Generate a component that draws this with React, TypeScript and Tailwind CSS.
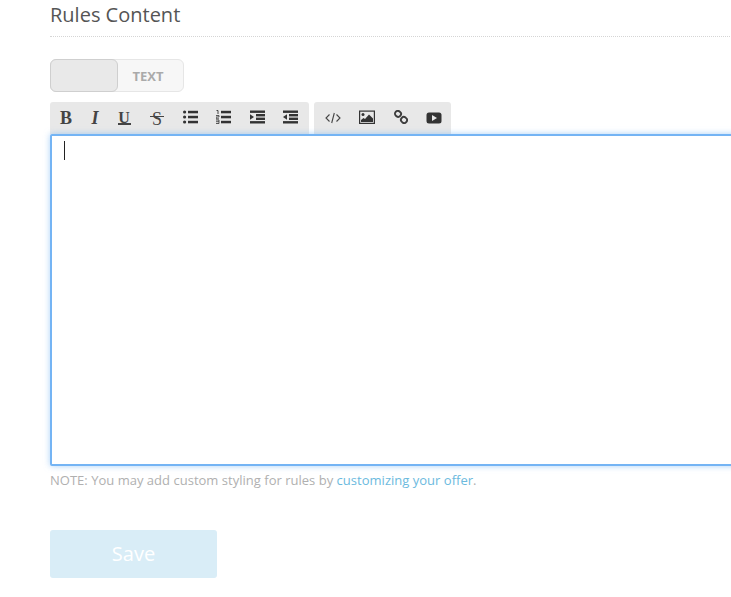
import React from "react";

const Btn = ({ children, w }: { children: React.ReactNode; w: string }) => (
  <span className={"flex h-8 items-center justify-center text-[#444] " + w}>{children}</span>
);

const Serif = ({ children, className }: { children: React.ReactNode; className: string }) => (
  <span className={"font-['Liberation_Serif',serif] leading-none text-[#444] " + className}>{children}</span>
);

const Svg = ({ children, w = 16, h = 14 }: { children: React.ReactNode; w?: number; h?: number }) => (
  <svg width={w} height={h} viewBox={`0 0 ${w} ${h}`} fill="#333">{children}</svg>
);

const Bars = () => (
  <>
    <rect x="5" y="0.8" width="10" height="2.5" />
    <rect x="5" y="5.8" width="10" height="2.5" />
    <rect x="5" y="10.8" width="10" height="2.5" />
  </>
);

const IndentBars = () => (
  <>
    <rect x="0" y="0.5" width="15" height="2.4" />
    <rect x="6" y="4" width="9" height="2.4" />
    <rect x="6" y="7.6" width="9" height="2.4" />
    <rect x="0" y="11.1" width="15" height="2.4" />
  </>
);

export default function App() {
  return (
    <div className="h-[597px] w-[731px] overflow-hidden bg-white pl-[50px] font-['Open_Sans',sans-serif]">
      <div className="w-[720px]">
        <h2 className="h-[37px] border-b border-dotted border-[#d5d5d5] pt-[1px] text-[20px] leading-[27px] text-[#555]">Rules Content</h2>

        <div className="mt-[22px] flex h-[33px] w-[134px] rounded-[6px] border border-[#e6e6e6] bg-[#f7f7f7]">
          <div className="-my-px -ml-px h-[33px] w-[68px] rounded-[6px] border border-[#cfcfcf] bg-[#e9e9e9]" />
          <div className="flex flex-1 items-center justify-center pr-[5px] pt-[2px] text-[13px] font-bold text-[#aaa]">TEXT</div>
        </div>

        <div className="mt-[10px] flex gap-[5px]">
          <div className="flex h-8 w-[259px] items-center rounded-t-[3px] bg-[#e8e8e8]">
            <Btn w="w-[32px] pb-[1px]"><Serif className="text-[18px] font-bold">B</Serif></Btn>
            <Btn w="w-[26px] pb-[1px]"><Serif className="text-[18px] font-bold italic">I</Serif></Btn>
            <Btn w="w-[32px] pb-[1px]">
              <span className="relative flex h-[15px] w-[13px] justify-center">
                <Serif className="text-[16px] font-bold">U</Serif>
                <span className="absolute bottom-0 left-0 h-[2px] w-[13px] bg-[#444]" />
              </span>
            </Btn>
            <Btn w="w-[34px] pb-[1px]">
              <span className="relative flex h-[15px] w-[14px] justify-center">
                <Serif className="text-[18px]">S</Serif>
                <span className="absolute left-0 top-[6px] h-[1px] w-[14px] bg-[#444]" />
              </span>
            </Btn>
            <Btn w="w-[33px] pb-[2px]">
              <Svg>
                <circle cx="1.6" cy="2" r="1.6" /><circle cx="1.6" cy="7" r="1.6" /><circle cx="1.6" cy="12" r="1.6" />
                <Bars />
              </Svg>
            </Btn>
            <Btn w="w-[34px] pb-[2px]">
              <Svg>
                <path d="M0.5 0.5 H2 V4" fill="none" stroke="#333" strokeWidth="0.9" />
                <path d="M0 5.5 H3 V7 H0 V8.8 H3" fill="none" stroke="#333" strokeWidth="0.8" />
                <path d="M0 10 H3 V13.5 H0 M0 11.7 H3" fill="none" stroke="#333" strokeWidth="0.8" />
                <Bars />
              </Svg>
            </Btn>
            <Btn w="w-[33px] pb-[2px]">
              <Svg>
                <IndentBars />
                <path d="M0 4.2 L4 7 L0 9.8 Z" />
              </Svg>
            </Btn>
            <Btn w="w-[34px] pb-[2px]">
              <Svg>
                <IndentBars />
                <path d="M4 4.2 L0 7 L4 9.8 Z" />
              </Svg>
            </Btn>
          </div>
          <div className="flex h-8 w-[137px] items-center rounded-t-[3px] bg-[#e8e8e8] pl-[1px]">
            <Btn w="w-[35px]">
              <svg width="16" height="12" viewBox="0 0 16 12" fill="none" stroke="#444" strokeWidth="1.1">
                <path d="M4.5 2.5 L1 6 L4.5 9.5 M11.5 2.5 L15 6 L11.5 9.5 M9.3 1 L6.7 11" />
              </svg>
            </Btn>
            <Btn w="w-[34px] pb-[2px]">
              <Svg>
                <rect x="0.6" y="1.1" width="14.8" height="12.3" fill="none" stroke="#333" strokeWidth="1.2" />
                <circle cx="4" cy="4.5" r="1.5" />
                <path d="M2 12 L2 10 L4.5 8 L6 9 L10 4.5 L14 8.5 L14 12 Z" />
              </Svg>
            </Btn>
            <Btn w="w-[33px] pb-[2px]">
              <svg width="14" height="14" viewBox="0 0 14 14" fill="none" stroke="#3d3d3d" strokeWidth="1.9">
                <rect x="1" y="1" width="6" height="5.6" rx="2.6" transform="rotate(40 4 3.8)" />
                <rect x="7" y="7.2" width="6" height="5.6" rx="2.6" transform="rotate(40 10 10)" />
              </svg>
            </Btn>
            <Btn w="w-[34px]">
              <Svg h={12}>
                <rect x="0.5" y="0.5" width="15" height="11" rx="2.5" />
                <path d="M6 3 L11 6 L6 9 Z" fill="#e8e8e8" />
              </Svg>
            </Btn>
          </div>
        </div>

        <div className="relative h-[332px] w-full rounded-[2px] border-2 border-[#74b4f4] bg-white pl-3 pt-[5px] shadow-[0_0_6px_rgba(116,180,244,0.6)]">
          <div className="h-[19px] w-px bg-[#222]" />
        </div>

        <p className="mt-[5px] text-[13px] leading-[18px] tracking-[0.015px] text-[#b0b0b0]">
          NOTE: You may add custom styling for rules by <a className="text-[#6cbade]">customizing your offer</a>.
        </p>

        <button className="mt-[41px] flex h-12 w-[167px] items-center justify-center rounded-[3px] bg-[#d9edf7] text-[20px] text-white">Save</button>
      </div>
    </div>
  );
}
